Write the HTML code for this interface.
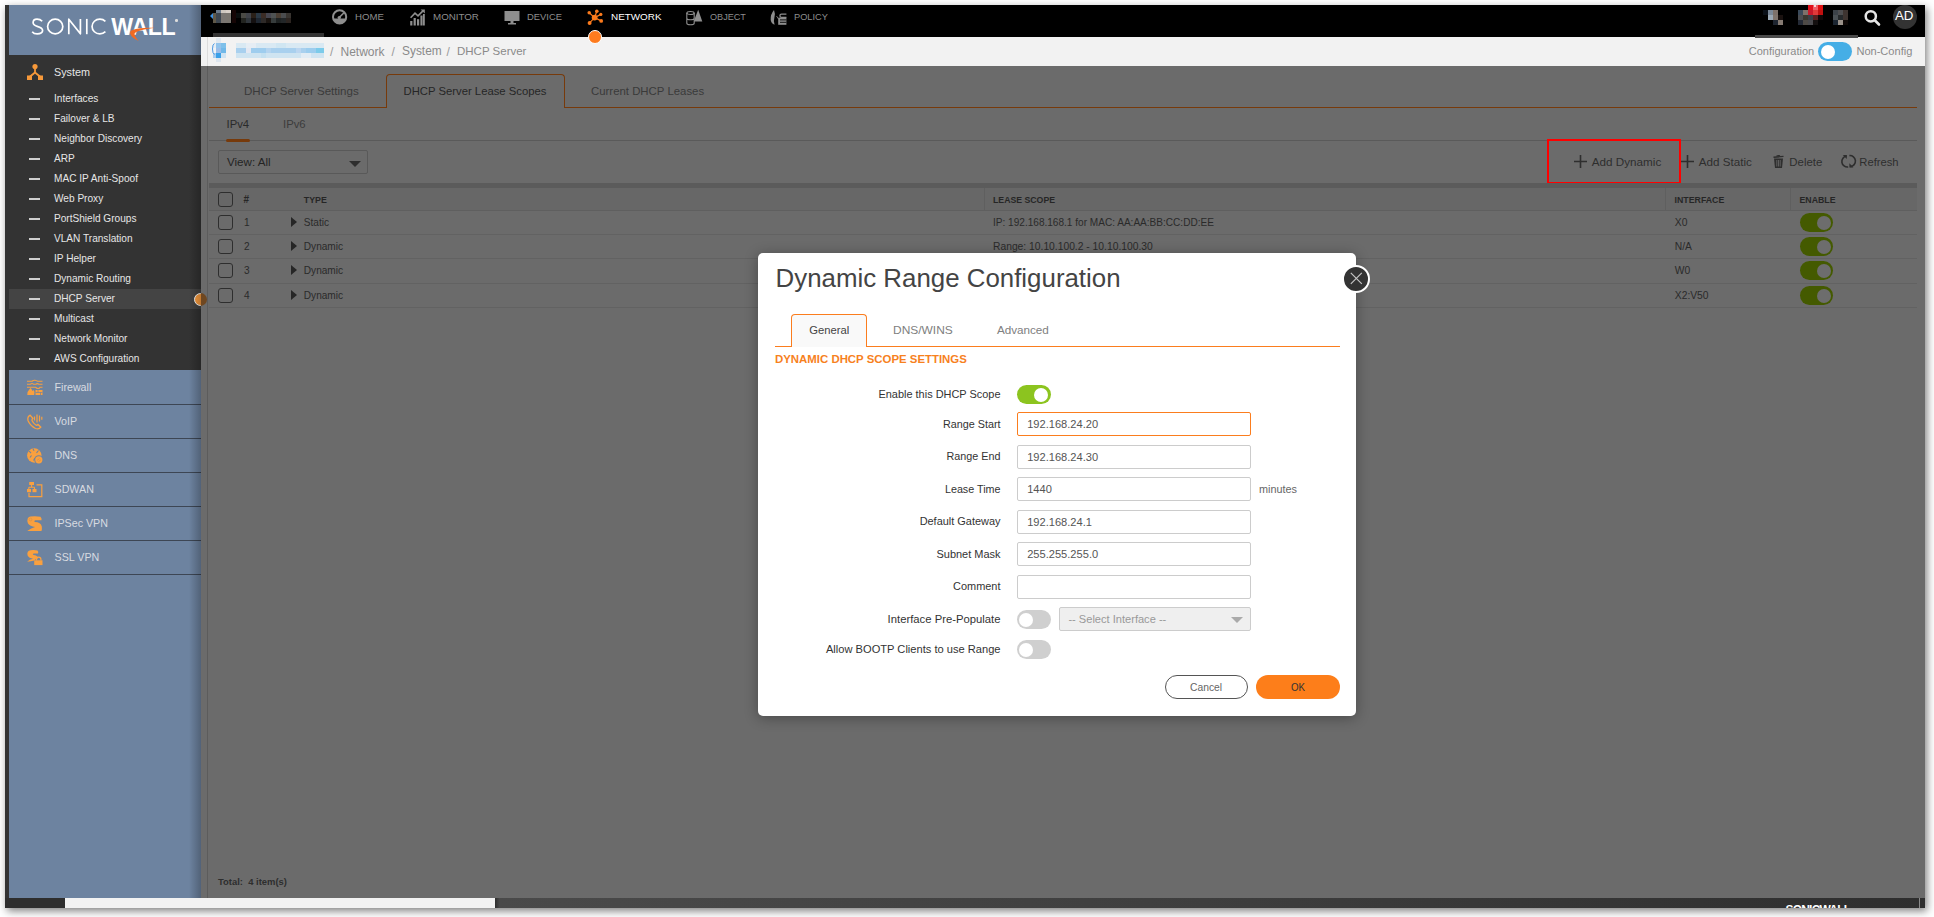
<!DOCTYPE html>
<html><head><meta charset="utf-8">
<style>
*{box-sizing:border-box;margin:0;padding:0}
html,body{width:1934px;height:917px;overflow:hidden;background:#fff;font-family:"Liberation Sans",sans-serif}
.a{position:absolute}
.t{position:absolute;white-space:nowrap;line-height:1}
svg{position:absolute;overflow:visible}
</style></head><body>

<div class="a" style="left:5px;top:5px;width:1920px;height:903px;background:#333;box-shadow:2px 3px 8px rgba(0,0,0,.5)"></div>
<div class="a" style="left:5px;top:5px;width:196px;height:893px;background:#333"></div>
<div class="a" style="left:9px;top:5px;width:192px;height:50px;background:#6d83a0"></div>
<svg style="left:0;top:0" width="220" height="60"><g stroke="#fff" stroke-width="1.7" fill="none" stroke-linejoin="round"><path d="M42.2 21.3Q40.2 19.1 37 19.1Q33.1 19.1 33.1 22.6Q33.1 25.3 37.2 26.4Q42.6 27.8 42.6 30.6Q42.6 33.9 37.2 33.9Q33.8 33.9 32.2 31.7"/><ellipse cx="55.2" cy="26.5" rx="7.6" ry="7.4"/><path d="M68.8 34.2V19.2L80.4 33.8V18.9"/><path d="M86.8 18.9V34.2"/><path d="M105.4 21.3A7.8 7.4 0 1 0 105.4 31.7"/></g></svg>
<div class="t" style="left:111.3px;top:16.1px;font-size:23.2px;color:#fff;font-weight:700;letter-spacing:-0.45px;transform:scaleY(1.03);transform-origin:0 19.5px">WALL</div>
<div class="a" style="left:175px;top:19px;width:2.6px;height:2.6px;background:#ddd;border-radius:50%"></div>
<svg style="left:0;top:0" width="220" height="60"><path d="M154.5 27.8Q140 27.2 132.5 30Q129.2 31.6 130.4 34.2Q132.3 38.2 138.8 41Q134.2 36.3 134.6 33.6Q136 30.3 154.5 27.8Z" fill="#f26a21"/></svg>
<svg style="left:25.6px;top:63px" width="18" height="18" viewBox="0 0 18 18"><circle cx="9" cy="3.5" r="2.6" fill="#f7993a"/><path d="M9 5 V9.5 M9 9.5 L3.5 14 M9 9.5 L14.5 14" stroke="#f7993a" stroke-width="1.8" fill="none"/><rect x="1" y="12.5" width="5" height="4.5" fill="#f7993a"/><rect x="12" y="12.5" width="5" height="4.5" fill="#f7993a"/></svg>
<div class="t" style="left:54px;top:67.06px;font-size:10.8px;color:#e6e6e6;font-weight:400;">System</div>
<div class="a" style="left:29px;top:98px;width:11px;height:2px;background:#cfcfcf"></div>
<div class="t" style="left:54px;top:93.95px;font-size:10.1px;color:#e6e6e6;font-weight:400;">Interfaces</div>
<div class="a" style="left:29px;top:118px;width:11px;height:2px;background:#cfcfcf"></div>
<div class="t" style="left:54px;top:113.95px;font-size:10.1px;color:#e6e6e6;font-weight:400;">Failover &amp; LB</div>
<div class="a" style="left:29px;top:138px;width:11px;height:2px;background:#cfcfcf"></div>
<div class="t" style="left:54px;top:133.95px;font-size:10.1px;color:#e6e6e6;font-weight:400;">Neighbor Discovery</div>
<div class="a" style="left:29px;top:158px;width:11px;height:2px;background:#cfcfcf"></div>
<div class="t" style="left:54px;top:153.95px;font-size:10.1px;color:#e6e6e6;font-weight:400;">ARP</div>
<div class="a" style="left:29px;top:178px;width:11px;height:2px;background:#cfcfcf"></div>
<div class="t" style="left:54px;top:173.95px;font-size:10.1px;color:#e6e6e6;font-weight:400;">MAC IP Anti-Spoof</div>
<div class="a" style="left:29px;top:198px;width:11px;height:2px;background:#cfcfcf"></div>
<div class="t" style="left:54px;top:193.95px;font-size:10.1px;color:#e6e6e6;font-weight:400;">Web Proxy</div>
<div class="a" style="left:29px;top:218px;width:11px;height:2px;background:#cfcfcf"></div>
<div class="t" style="left:54px;top:213.95px;font-size:10.1px;color:#e6e6e6;font-weight:400;">PortShield Groups</div>
<div class="a" style="left:29px;top:238px;width:11px;height:2px;background:#cfcfcf"></div>
<div class="t" style="left:54px;top:233.95px;font-size:10.1px;color:#e6e6e6;font-weight:400;">VLAN Translation</div>
<div class="a" style="left:29px;top:258px;width:11px;height:2px;background:#cfcfcf"></div>
<div class="t" style="left:54px;top:253.95px;font-size:10.1px;color:#e6e6e6;font-weight:400;">IP Helper</div>
<div class="a" style="left:29px;top:278px;width:11px;height:2px;background:#cfcfcf"></div>
<div class="t" style="left:54px;top:273.95px;font-size:10.1px;color:#e6e6e6;font-weight:400;">Dynamic Routing</div>
<div class="a" style="left:9px;top:289px;width:192px;height:20px;background:#444"></div>
<div class="a" style="left:29px;top:298px;width:11px;height:2px;background:#cfcfcf"></div>
<div class="t" style="left:54px;top:293.95px;font-size:10.1px;color:#e6e6e6;font-weight:400;">DHCP Server</div>
<div class="a" style="left:29px;top:318px;width:11px;height:2px;background:#cfcfcf"></div>
<div class="t" style="left:54px;top:313.95px;font-size:10.1px;color:#e6e6e6;font-weight:400;">Multicast</div>
<div class="a" style="left:29px;top:338px;width:11px;height:2px;background:#cfcfcf"></div>
<div class="t" style="left:54px;top:333.95px;font-size:10.1px;color:#e6e6e6;font-weight:400;">Network Monitor</div>
<div class="a" style="left:29px;top:358px;width:11px;height:2px;background:#cfcfcf"></div>
<div class="t" style="left:54px;top:353.95px;font-size:10.1px;color:#e6e6e6;font-weight:400;">AWS Configuration</div>
<div class="a" style="left:9px;top:370px;width:192px;height:528px;background:#6d83a0"></div>
<div class="a" style="left:9px;top:404px;width:192px;height:1px;background:#3d4654"></div>
<div class="t" style="left:54.5px;top:382.24px;font-size:10.7px;color:#d8dbe0;font-weight:400;">Firewall</div>
<div class="a" style="left:9px;top:438px;width:192px;height:1px;background:#3d4654"></div>
<div class="t" style="left:54.5px;top:416.24px;font-size:10.7px;color:#d8dbe0;font-weight:400;">VoIP</div>
<div class="a" style="left:9px;top:472px;width:192px;height:1px;background:#3d4654"></div>
<div class="t" style="left:54.5px;top:450.24px;font-size:10.7px;color:#d8dbe0;font-weight:400;">DNS</div>
<div class="a" style="left:9px;top:506px;width:192px;height:1px;background:#3d4654"></div>
<div class="t" style="left:54.5px;top:484.24px;font-size:10.7px;color:#d8dbe0;font-weight:400;">SDWAN</div>
<div class="a" style="left:9px;top:540px;width:192px;height:1px;background:#3d4654"></div>
<div class="t" style="left:54.5px;top:518.24px;font-size:10.7px;color:#d8dbe0;font-weight:400;">IPSec VPN</div>
<div class="a" style="left:9px;top:574px;width:192px;height:1px;background:#3d4654"></div>
<div class="t" style="left:54.5px;top:552.24px;font-size:10.7px;color:#d8dbe0;font-weight:400;">SSL VPN</div>
<svg style="left:27px;top:380px" width="16" height="15" viewBox="0 0 16 15"><path d="M0 1.2H5Q6.5 0 8 0.3Q9.5 0.6 10.5 1.2H15.5M0 4.2H3.5Q5 2.8 6.5 4.2H9Q10 3 12 4.2H15.5M0 7.2H8.5Q9.5 8.5 11 8.5Q12.5 8.5 13 7.2H15.5" stroke="#f9a03f" stroke-width="1.1" fill="none"/><path d="M0.3 15Q-0.3 11.8 2.5 9.2Q3.3 8.5 3.5 7.8Q5 9.5 5.5 11Q6.5 10.5 6.5 9.8Q8.5 12.5 7.2 15Z" fill="#f9a03f"/><path d="M8.5 10H15.5V15H8.5Z" fill="#f9a03f"/><path d="M8.5 12.5H15.5M11 10V12.5M13.5 12.5V15" stroke="#6d83a0" stroke-width="0.7"/></svg>
<svg style="left:27px;top:414px" width="16" height="16" viewBox="0 0 16 16"><path d="M3.2 1.2Q0.2 2.5 1 6.5Q3 11.5 8.5 14.5Q12 15.8 13.8 13.2L11 10.5Q10 11.6 8.8 11Q6.2 9.2 5 6.5Q4.8 5.3 5.8 4.3Z" stroke="#f9a03f" stroke-width="1.3" fill="none"/><path d="M7.5 2.5V6.5M10 0.5V8.5M12.5 1.5V7.5M14.8 2.8V5.8" stroke="#f9a03f" stroke-width="1.2"/></svg>
<svg style="left:27px;top:448px" width="16" height="16" viewBox="0 0 16 16"><circle cx="7.3" cy="7.5" r="7.2" fill="#f9a03f"/><path d="M2.2 3.2L4 5.2M6 0.8L7 2.8M9.5 4.8L11.5 2.5M4.5 7.5L3 9.5M8 10L6.5 12.5" stroke="#6d83a0" stroke-width="1.1"/><circle cx="11.8" cy="11.8" r="4.6" fill="#6d83a0"/><circle cx="11.8" cy="11.8" r="3.6" fill="#f9a03f"/><path d="M10 12.5L12.5 10.5M11.5 13.5L13.8 12" stroke="#c98a50" stroke-width="0.6"/></svg>
<svg style="left:27px;top:482px" width="16" height="16" viewBox="0 0 16 16"><rect x="2.2" y="0" width="4.8" height="3" fill="#f9a03f"/><path d="M4.6 3V5.2M1.8 5.2H7.5M1.8 5.2V7M7.5 5.2V7" stroke="#f9a03f" stroke-width="1.1" fill="none"/><rect x="0" y="7" width="4" height="3.2" fill="#f9a03f"/><rect x="5.5" y="7" width="4" height="3.2" fill="#f9a03f"/><path d="M9.5 2.8H14.8V14.6H2V10.8" stroke="#f9a03f" stroke-width="1.2" fill="none"/></svg>
<svg style="left:27px;top:516px" width="16" height="16" viewBox="0 0 16 16"><path d="M3.5 0.5Q8.5 -0.3 13.5 0.8Q15 2.5 14.5 4.3H8.2Q6.5 5 7.8 6Q13.8 6.2 14.8 10.5Q15.2 13 14.5 15H0.2Q3.5 12.5 8 11Q3 10 1 7.5Q-0.2 4.5 0.8 2.2Q1.8 0.8 3.5 0.5Z" fill="#f9a03f"/><circle cx="3.5" cy="3.5" r="1.4" stroke="#c98a50" stroke-width="0.5" fill="none"/></svg>
<svg style="left:27px;top:550px" width="16" height="16" viewBox="0 0 16 16"><path d="M3.5 0.2Q7.5 -0.3 10.5 0.5Q11.8 2 11 3.5H6.5Q5.2 4.2 6.5 5Q10.5 5.3 11.2 8Q8.5 8.5 7.5 10.5Q3.5 11.5 0.2 11.8Q2.5 9.5 6 8.8Q2 8.2 0.8 6Q-0.2 3.5 0.8 1.8Q1.8 0.5 3.5 0.2Z" fill="#f9a03f"/><path d="M9.5 10.5V9.3A2.2 2.2 0 0 1 13.9 9.3V10.5" stroke="#f9a03f" stroke-width="1.2" fill="none"/><rect x="7.2" y="10.3" width="8.3" height="4.8" fill="#f9a03f"/></svg>
<div class="a" style="left:194px;top:293px;width:13px;height:13px;border-radius:50%;background:#fe9f40;border:1.2px solid #fff"></div>
<div class="a" style="left:189px;top:5px;width:12px;height:893px;background:linear-gradient(to right,rgba(0,0,0,0),rgba(0,0,0,.25))"></div>
<div class="a" style="left:201px;top:5px;width:1724px;height:32px;background:#000"></div>
<div class="a" style="left:201px;top:37px;width:1724px;height:29px;background:#f2f2f2"></div>
<div class="a" style="left:207px;top:37px;width:1px;height:29px;background:#dcdcdc"></div>
<div class="a" style="left:213px;top:13px;width:3px;height:10px;background:#5f5848"></div>
<div class="a" style="left:216px;top:10px;width:5px;height:3px;background:#6a7888"></div>
<div class="a" style="left:216px;top:13px;width:5px;height:10px;background:#3d4650"></div>
<div class="a" style="left:221px;top:10px;width:5px;height:3px;background:#cfc8c0"></div>
<div class="a" style="left:221px;top:13px;width:5px;height:10px;background:#7a7672"></div>
<div class="a" style="left:226px;top:10px;width:5px;height:3px;background:#d8d0c8"></div>
<div class="a" style="left:226px;top:13px;width:5px;height:10px;background:#7a7670"></div>
<div class="a" style="left:232px;top:10px;width:4px;height:13px;background:#150505"></div>
<div class="a" style="left:236px;top:13px;width:5px;height:5px;background:#0a0e0e"></div>
<div class="a" style="left:241px;top:13px;width:5px;height:5px;background:#4a4a45"></div>
<div class="a" style="left:241px;top:18px;width:5px;height:5px;background:#222420"></div>
<div class="a" style="left:246px;top:13px;width:5px;height:5px;background:#40434a"></div>
<div class="a" style="left:246px;top:18px;width:5px;height:5px;background:#30363c"></div>
<div class="a" style="left:251px;top:13px;width:5px;height:5px;background:#2a2018"></div>
<div class="a" style="left:251px;top:18px;width:5px;height:5px;background:#141010"></div>
<div class="a" style="left:256px;top:13px;width:5px;height:5px;background:#2a3845"></div>
<div class="a" style="left:256px;top:18px;width:5px;height:5px;background:#1e2630"></div>
<div class="a" style="left:261px;top:13px;width:5px;height:5px;background:#3b2c25"></div>
<div class="a" style="left:261px;top:18px;width:5px;height:5px;background:#2e2a28"></div>
<div class="a" style="left:266px;top:13px;width:5px;height:5px;background:#45454f"></div>
<div class="a" style="left:266px;top:18px;width:5px;height:5px;background:#1a1410"></div>
<div class="a" style="left:271px;top:13px;width:5px;height:5px;background:#4e5252"></div>
<div class="a" style="left:271px;top:18px;width:5px;height:5px;background:#363c3c"></div>
<div class="a" style="left:276px;top:13px;width:5px;height:5px;background:#4a3e33"></div>
<div class="a" style="left:276px;top:18px;width:5px;height:5px;background:#1e2222"></div>
<div class="a" style="left:281px;top:13px;width:5px;height:5px;background:#4a4c4e"></div>
<div class="a" style="left:281px;top:18px;width:5px;height:5px;background:#222628"></div>
<div class="a" style="left:286px;top:13px;width:5px;height:5px;background:#383430"></div>
<div class="a" style="left:286px;top:18px;width:5px;height:5px;background:#2c2420"></div>
<svg style="left:210px;top:13px" width="4" height="6"><path d="M3 0L0 3L3 6Z" fill="#3d8fe0"/></svg>
<div class="a" style="left:213px;top:33px;width:111px;height:4px;background:#333"></div>
<div class="a" style="left:216px;top:38px;width:5px;height:5px;background:#e0e8f0"></div>
<div class="a" style="left:213px;top:43px;width:3px;height:5px;background:#e8eef4"></div>
<div class="a" style="left:216px;top:43px;width:5px;height:5px;background:#93c4ec"></div>
<div class="a" style="left:221px;top:43px;width:5px;height:5px;background:#7ec0ea"></div>
<div class="a" style="left:213px;top:48px;width:3px;height:5px;background:#f0f4f8"></div>
<div class="a" style="left:216px;top:48px;width:5px;height:5px;background:#9cbde8"></div>
<div class="a" style="left:221px;top:48px;width:5px;height:5px;background:#70b8e8"></div>
<div class="a" style="left:213px;top:53px;width:3px;height:5px;background:#a8cdf0"></div>
<div class="a" style="left:216px;top:53px;width:5px;height:5px;background:#3aa0e8"></div>
<div class="a" style="left:221px;top:53px;width:5px;height:5px;background:#cfe3f2"></div>
<div class="a" style="left:216px;top:58px;width:5px;height:4px;background:#dde6ef"></div>
<div class="a" style="left:236px;top:43px;width:88px;height:5px;background:#d9e9f3"></div>
<div class="a" style="left:236px;top:48px;width:88px;height:5px;background:#a9d0ee"></div>
<div class="a" style="left:236px;top:53px;width:88px;height:5px;background:#cfe4f1"></div>
<div class="a" style="left:246px;top:48px;width:5px;height:5px;background:#e4e8f2"></div>
<div class="a" style="left:251px;top:48px;width:15px;height:5px;background:#9fcdee"></div>
<div class="a" style="left:266px;top:48px;width:5px;height:5px;background:#b5d4ef"></div>
<div class="a" style="left:296px;top:48px;width:5px;height:5px;background:#bcd6f0"></div>
<div class="a" style="left:306px;top:48px;width:10px;height:5px;background:#9ccdee"></div>
<div class="a" style="left:316px;top:48px;width:8px;height:5px;background:#7ccbea"></div>
<div class="a" style="left:246px;top:43px;width:10px;height:5px;background:#e6edf4"></div>
<div class="a" style="left:276px;top:43px;width:10px;height:5px;background:#d0e6f2"></div>
<div class="a" style="left:301px;top:53px;width:10px;height:5px;background:#e2ecf4"></div>
<div class="a" style="left:261px;top:53px;width:5px;height:5px;background:#c4e0f0"></div>
<svg style="left:212px;top:43px" width="3" height="12"><path d="M2.5 0.5Q0.5 1 0.5 6Q0.5 10.5 2.5 11.5" stroke="#3a8fe0" stroke-width="0.9" fill="none"/></svg>
<div class="t" style="left:330px;top:45.64px;font-size:12px;color:#9a9a9a;font-weight:400;">/</div>
<div class="t" style="left:340.5px;top:45.64px;font-size:12px;color:#8a8a8a;font-weight:400;">Network</div>
<div class="t" style="left:391.5px;top:45.64px;font-size:12px;color:#9a9a9a;font-weight:400;">/</div>
<div class="t" style="left:402px;top:45.73px;font-size:11.9px;color:#8a8a8a;font-weight:400;">System</div>
<div class="t" style="left:446.5px;top:45.64px;font-size:12px;color:#9a9a9a;font-weight:400;">/</div>
<div class="t" style="left:457px;top:46.07px;font-size:11.5px;color:#8a8a8a;font-weight:400;">DHCP Server</div>
<div class="t" style="left:1748.8px;top:45.99px;font-size:11px;color:#8a8a8a;font-weight:400;">Configuration</div>
<div class="a" style="left:1818px;top:42px;width:34px;height:19px;border-radius:10px;background:#45aee6"><div class="a" style="left:2.8px;top:2.5px;width:14px;height:14px;border-radius:50%;background:#fff"></div></div>
<div class="t" style="left:1856.4px;top:45.93px;font-size:11.07px;color:#8a8a8a;font-weight:400;">Non-Config</div>
<div class="t" style="left:355.4px;top:11.92px;font-size:9.9px;color:#8e8e8e;font-weight:400;transform:scaleX(0.976);transform-origin:left">HOME</div>
<div class="t" style="left:433px;top:11.92px;font-size:9.9px;color:#8e8e8e;font-weight:400;transform:scaleX(0.988);transform-origin:left">MONITOR</div>
<div class="t" style="left:527.4px;top:11.92px;font-size:9.9px;color:#8e8e8e;font-weight:400;transform:scaleX(0.95);transform-origin:left">DEVICE</div>
<div class="t" style="left:611px;top:11.92px;font-size:9.9px;color:#ffffff;font-weight:400;transform:scaleX(1.0);transform-origin:left">NETWORK</div>
<div class="t" style="left:710px;top:11.92px;font-size:9.9px;color:#8e8e8e;font-weight:400;transform:scaleX(0.922);transform-origin:left">OBJECT</div>
<div class="t" style="left:794.4px;top:11.92px;font-size:9.9px;color:#8e8e8e;font-weight:400;transform:scaleX(0.936);transform-origin:left">POLICY</div>
<svg style="left:331px;top:9px" width="17" height="17" viewBox="0 0 17 17"><circle cx="8.6" cy="7.9" r="6.6" stroke="#8e8e8e" stroke-width="2" fill="none"/><path d="M2.2 9.5H15A6.6 6.6 0 0 1 2.2 9.5Z" fill="#8e8e8e"/><circle cx="8.3" cy="8.6" r="1.7" fill="#8e8e8e"/><path d="M8.3 8.4L13 3.7" stroke="#8e8e8e" stroke-width="1.5"/></svg>
<svg style="left:410px;top:9px" width="16" height="17" viewBox="0 0 16 17"><path d="M0.6 8.8L5 4.2L8 6.8L13.2 1.6" stroke="#8e8e8e" stroke-width="1.6" fill="none"/><path d="M10.6 0.4H14.8V4.6Z" fill="#8e8e8e"/><rect x="0.2" y="12" width="2.2" height="4.5" fill="#8e8e8e"/><rect x="3.6" y="9" width="2.2" height="7.5" fill="#8e8e8e"/><rect x="7" y="10.2" width="2.2" height="6.3" fill="#8e8e8e"/><rect x="10.4" y="6.5" width="2.2" height="10" fill="#8e8e8e"/><rect x="13" y="5" width="1.8" height="11.5" fill="#8e8e8e"/></svg>
<svg style="left:504px;top:10px" width="16" height="15" viewBox="0 0 16 15"><rect x="0.5" y="1" width="15" height="10" fill="#8e8e8e"/><rect x="6.5" y="11" width="3" height="2" fill="#8e8e8e"/><rect x="4" y="13" width="8" height="1.5" fill="#8e8e8e"/></svg>
<svg style="left:587px;top:9px" width="17" height="17" viewBox="0 0 17 17"><path d="M7.6 8.6L2.2 3.8M7.6 8.6L9.8 2.3M7.6 8.6L13.8 5.4M7.6 8.6L14.2 11.9M7.6 8.6L2.6 13.9" stroke="#fb7a1c" stroke-width="1.2"/><circle cx="7.6" cy="8.6" r="2.9" fill="#fb7a1c"/><circle cx="2.2" cy="3.8" r="1.75" fill="#fb7a1c"/><circle cx="9.8" cy="2.3" r="1.8" fill="#fb7a1c"/><circle cx="13.8" cy="5.4" r="1.65" fill="#fb7a1c"/><circle cx="14.2" cy="11.9" r="1.9" fill="#fb7a1c"/><circle cx="2.6" cy="13.9" r="2" fill="#fb7a1c"/></svg>
<div class="a" style="left:588px;top:30px;width:14px;height:14px;border-radius:50%;background:#fe7b1e;border:1px solid #fff"></div>
<svg style="left:686px;top:9px" width="17" height="16" viewBox="0 0 17 16"><path d="M7.6 12.6L12.2 0.7L16.3 12.6Z" fill="#8e8e8e"/><path d="M0.8 4V14.3A3.7 1.5 0 0 0 8.2 14.3V4Z" fill="#000"/><ellipse cx="4.5" cy="4" rx="3.7" ry="1.5" fill="#000" stroke="#8e8e8e" stroke-width="1.1"/><path d="M0.8 4V14.3A3.7 1.5 0 0 0 8.2 14.3V4M0.8 9.3A3.7 1.5 0 0 0 8.2 9.3" stroke="#8e8e8e" stroke-width="1.1" fill="none"/></svg>
<svg style="left:770px;top:10px" width="17" height="15" viewBox="0 0 17 15"><path d="M4 0Q0.2 4.5 0.7 10Q1.2 13.5 4.6 14.8Q3.2 11 4.4 7.5Q5.6 4 4 0Z" fill="#8e8e8e"/><path d="M16.4 4.2H11.5A1.6 1.6 0 0 0 11.5 7.4H16.4" stroke="#8e8e8e" stroke-width="1.3" fill="none"/><rect x="8.2" y="7.6" width="8.2" height="7.2" fill="#8e8e8e"/><path d="M10 9.9H16.4M10 12.3H16.4" stroke="#000" stroke-width="0.9"/><path d="M6.5 6L8.5 9" stroke="#8e8e8e" stroke-width="0.8"/></svg>
<div class="a" style="left:1763px;top:10px;width:5px;height:5px;background:#0a1018"></div>
<div class="a" style="left:1768px;top:10px;width:5px;height:5px;background:#7a8898"></div>
<div class="a" style="left:1768px;top:15px;width:5px;height:5px;background:#9aa8b5"></div>
<div class="a" style="left:1773px;top:10px;width:5px;height:5px;background:#7d716a"></div>
<div class="a" style="left:1773px;top:15px;width:5px;height:5px;background:#80756e"></div>
<div class="a" style="left:1778px;top:15px;width:5px;height:5px;background:#1a1210"></div>
<div class="a" style="left:1773px;top:20px;width:5px;height:5px;background:#1e2530"></div>
<div class="a" style="left:1778px;top:20px;width:5px;height:5px;background:#857a72"></div>
<div class="a" style="left:1798px;top:10px;width:5px;height:5px;background:#3a4a5a"></div>
<div class="a" style="left:1798px;top:15px;width:5px;height:5px;background:#4a4c50"></div>
<div class="a" style="left:1798px;top:20px;width:5px;height:5px;background:#242a36"></div>
<div class="a" style="left:1803px;top:10px;width:5px;height:5px;background:#7d716a"></div>
<div class="a" style="left:1803px;top:15px;width:5px;height:5px;background:#3a3830"></div>
<div class="a" style="left:1803px;top:20px;width:5px;height:5px;background:#4e4a46"></div>
<div class="a" style="left:1808px;top:5px;width:5px;height:5px;background:#e0101a"></div>
<div class="a" style="left:1808px;top:10px;width:5px;height:5px;background:#c8182a"></div>
<div class="a" style="left:1808px;top:15px;width:5px;height:5px;background:#3a4048"></div>
<div class="a" style="left:1808px;top:20px;width:5px;height:5px;background:#4a4a4e"></div>
<div class="a" style="left:1813px;top:5px;width:5px;height:5px;background:#ee6068"></div>
<div class="a" style="left:1813px;top:10px;width:5px;height:5px;background:#e03a3a"></div>
<div class="a" style="left:1813px;top:15px;width:5px;height:5px;background:#5a2020"></div>
<div class="a" style="left:1813px;top:20px;width:5px;height:5px;background:#141010"></div>
<div class="a" style="left:1818px;top:5px;width:5px;height:5px;background:#e01010"></div>
<div class="a" style="left:1818px;top:10px;width:5px;height:5px;background:#c01010"></div>
<div class="a" style="left:1818px;top:15px;width:5px;height:5px;background:#100808"></div>
<div class="a" style="left:1833px;top:10px;width:5px;height:5px;background:#3c4248"></div>
<div class="a" style="left:1833px;top:15px;width:5px;height:5px;background:#4a5054"></div>
<div class="a" style="left:1833px;top:20px;width:5px;height:5px;background:#1c2632"></div>
<div class="a" style="left:1838px;top:10px;width:5px;height:5px;background:#4e4e50"></div>
<div class="a" style="left:1838px;top:15px;width:5px;height:5px;background:#262a2c"></div>
<div class="a" style="left:1838px;top:20px;width:5px;height:5px;background:#9a928a"></div>
<div class="a" style="left:1843px;top:10px;width:5px;height:10px;background:#3e3430"></div>
<div class="a" style="left:1843px;top:20px;width:5px;height:5px;background:#100a08"></div>
<div class="a" style="left:1814px;top:5px;width:2px;height:2px;background:#fff;border-radius:50%"></div>
<svg style="left:1864px;top:10px" width="17" height="16" viewBox="0 0 17 16"><circle cx="6.8" cy="6.3" r="5.1" stroke="#e6e6e6" stroke-width="2.5" fill="none"/><path d="M10.5 10L15 14.5" stroke="#e6e6e6" stroke-width="2.6" stroke-linecap="round"/></svg>
<div class="a" style="left:1893px;top:5px;width:24px;height:24px;border-radius:50%;background:#333"></div>
<div class="t" style="left:1895px;top:9.34px;font-size:13.3px;color:#fff;font-weight:400;">AD</div>
<div class="a" style="left:1755px;top:35px;width:103px;height:3px;background:#4a4a4a"></div>
<div class="a" style="left:201px;top:66px;width:1724px;height:832px;background:#6b6b6b"></div>
<div class="a" style="left:201px;top:288px;width:6px;height:20px;background:transparent"></div>
<div class="a" style="left:201px;top:292px;width:6px;height:14px;overflow:hidden"><div class="a" style="left:-7px;top:1px;width:13px;height:13px;border-radius:50%;background:#6f4720"></div></div>
<div class="a" style="left:207px;top:66px;width:1px;height:832px;background:#5c5c5c"></div>
<div class="a" style="left:209px;top:107px;width:1708px;height:1px;background:#773a0b"></div>
<div class="a" style="left:386px;top:74px;width:179px;height:34px;border:1.2px solid #773a0b;border-bottom:none;border-radius:4px 4px 0 0;background:#6b6b6b"></div>
<div class="t" style="left:244px;top:86.02px;font-size:11.55px;color:#3a3a3a;font-weight:400;">DHCP Server Settings</div>
<div class="t" style="left:403.5px;top:86.23px;font-size:11.3px;color:#262626;font-weight:400;">DHCP Server Lease Scopes</div>
<div class="t" style="left:591px;top:86.15px;font-size:11.4px;color:#3a3a3a;font-weight:400;">Current DHCP Leases</div>
<div class="a" style="left:209px;top:140px;width:1708px;height:1px;background:#5a5a5a"></div>
<div class="t" style="left:226.5px;top:119.23px;font-size:11.3px;color:#2a2a2a;font-weight:400;">IPv4</div>
<div class="t" style="left:283px;top:119.23px;font-size:11.3px;color:#3c3c3c;font-weight:400;">IPv6</div>
<div class="a" style="left:226px;top:139px;width:24px;height:3px;background:#773a0b;border-radius:1.5px"></div>
<div class="a" style="left:218px;top:150px;width:150px;height:24px;border:1px solid #595959;border-radius:2px"></div>
<div class="t" style="left:227px;top:156.18px;font-size:11.6px;color:#242424;font-weight:400;">View: All</div>
<svg style="left:349px;top:161px" width="12" height="6"><path d="M0 0H12L6 6Z" fill="#2e2e2e"/></svg>
<svg style="left:1574px;top:155px" width="13" height="13"><path d="M6.5 0V13M0 6.5H13" stroke="#2e2e2e" stroke-width="1.6"/></svg>
<div class="t" style="left:1591.8px;top:155.80px;font-size:11.7px;color:#2e2e2e;font-weight:400;">Add Dynamic</div>
<svg style="left:1681px;top:155px" width="13" height="13"><path d="M6.5 0V13M0 6.5H13" stroke="#2e2e2e" stroke-width="1.6"/></svg>
<div class="t" style="left:1698.8px;top:155.86px;font-size:11.63px;color:#2e2e2e;font-weight:400;">Add Static</div>
<svg style="left:1773px;top:155px" width="11" height="13" viewBox="0 0 11 13"><path d="M0.5 2.2L10.5 1.4" stroke="#2e2e2e" stroke-width="1.4"/><path d="M3.5 1.2Q5 0 7 0.9" stroke="#2e2e2e" stroke-width="1.2" fill="none"/><path d="M1 3.6H10L9 13H2Z" fill="#2e2e2e"/><path d="M3.8 5V11.5M5.5 5V11.5M7.2 5V11.5" stroke="#6b6b6b" stroke-width="0.8"/></svg>
<div class="t" style="left:1789.3px;top:156.73px;font-size:11.42px;color:#2e2e2e;font-weight:400;">Delete</div>
<svg style="left:1841px;top:154px" width="15" height="15" viewBox="0 0 15 15"><path d="M5.6 2A5.5 5.5 0 0 0 7.2 13" stroke="#2e2e2e" stroke-width="1.6" fill="none"/><path d="M8.4 1.6A5.5 5.5 0 0 1 9.4 12.6" stroke="#2e2e2e" stroke-width="1.6" fill="none"/><path d="M1.8 1H5.8V5Z" fill="#2e2e2e"/><path d="M8.4 9.2V13.4H12.4Z" fill="#2e2e2e"/></svg>
<div class="t" style="left:1859.3px;top:156.90px;font-size:11.22px;color:#2e2e2e;font-weight:400;">Refresh</div>
<div class="a" style="left:1547px;top:139px;width:134px;height:45px;border:2px solid #ff0000"></div>
<div class="a" style="left:209px;top:183px;width:1708px;height:5px;background:#5b5b5b"></div>
<div class="a" style="left:209px;top:188px;width:1708px;height:23px;background:#676767"></div>
<div class="a" style="left:209px;top:210px;width:1708px;height:1px;background:#5f5f5f"></div>
<div class="a" style="left:984px;top:188px;width:1px;height:23px;background:#5f5f5f"></div>
<div class="a" style="left:1665px;top:188px;width:1px;height:23px;background:#5f5f5f"></div>
<div class="a" style="left:1790px;top:188px;width:1px;height:23px;background:#5f5f5f"></div>
<div class="t" style="left:243.5px;top:195.13px;font-size:10px;color:#262626;font-weight:700;">#</div>
<div class="t" style="left:303.8px;top:195.85px;font-size:8.8px;color:#262626;font-weight:700;">TYPE</div>
<div class="t" style="left:993px;top:195.92px;font-size:8.72px;color:#262626;font-weight:700;">LEASE SCOPE</div>
<div class="t" style="left:1674.6px;top:195.88px;font-size:8.77px;color:#262626;font-weight:700;">INTERFACE</div>
<div class="t" style="left:1799.5px;top:195.88px;font-size:8.76px;color:#262626;font-weight:700;">ENABLE</div>
<div class="a" style="left:218px;top:192px;width:15px;height:15px;border:1.3px solid #2e2e2e;border-radius:3px"></div>
<div class="a" style="left:209px;top:234px;width:1708px;height:1px;background:#626262"></div>
<div class="a" style="left:218px;top:215px;width:15px;height:15px;border:1.3px solid #2e2e2e;border-radius:3px"></div>
<div class="t" style="left:244px;top:217.75px;font-size:10.1px;color:#2a2a2a;font-weight:400;">1</div>
<svg style="left:291px;top:217px" width="6" height="10"><path d="M0 0L6 5L0 10Z" fill="#262626"/></svg>
<div class="t" style="left:303.8px;top:217.75px;font-size:10.1px;color:#2a2a2a;font-weight:400;">Static</div>
<div class="t" style="left:993px;top:217.78px;font-size:10.07px;color:#2a2a2a;font-weight:400;">IP: 192.168.168.1 for MAC: AA:AA:BB:CC:DD:EE</div>
<div class="t" style="left:1674.8px;top:217.58px;font-size:10.3px;color:#2a2a2a;font-weight:400;">X0</div>
<div class="a" style="left:1800px;top:213px;width:33px;height:19px;border-radius:10px;background:#445a00"><div class="a" style="left:17px;top:2.5px;width:14px;height:14px;border-radius:50%;background:#6d6d6d"></div></div>
<div class="a" style="left:209px;top:258px;width:1708px;height:1px;background:#626262"></div>
<div class="a" style="left:218px;top:239px;width:15px;height:15px;border:1.3px solid #2e2e2e;border-radius:3px"></div>
<div class="t" style="left:244px;top:241.75px;font-size:10.1px;color:#2a2a2a;font-weight:400;">2</div>
<svg style="left:291px;top:241px" width="6" height="10"><path d="M0 0L6 5L0 10Z" fill="#262626"/></svg>
<div class="t" style="left:303.8px;top:241.75px;font-size:10.1px;color:#2a2a2a;font-weight:400;">Dynamic</div>
<div class="t" style="left:993px;top:241.57px;font-size:10.31px;color:#2a2a2a;font-weight:400;">Range: 10.10.100.2 - 10.10.100.30</div>
<div class="t" style="left:1674.8px;top:241.58px;font-size:10.3px;color:#2a2a2a;font-weight:400;">N/A</div>
<div class="a" style="left:1800px;top:237px;width:33px;height:19px;border-radius:10px;background:#445a00"><div class="a" style="left:17px;top:2.5px;width:14px;height:14px;border-radius:50%;background:#6d6d6d"></div></div>
<div class="a" style="left:209px;top:283px;width:1708px;height:1px;background:#626262"></div>
<div class="a" style="left:218px;top:263px;width:15px;height:15px;border:1.3px solid #2e2e2e;border-radius:3px"></div>
<div class="t" style="left:244px;top:265.75px;font-size:10.1px;color:#2a2a2a;font-weight:400;">3</div>
<svg style="left:291px;top:265px" width="6" height="10"><path d="M0 0L6 5L0 10Z" fill="#262626"/></svg>
<div class="t" style="left:303.8px;top:265.75px;font-size:10.1px;color:#2a2a2a;font-weight:400;">Dynamic</div>
<div class="t" style="left:1674.8px;top:265.58px;font-size:10.3px;color:#2a2a2a;font-weight:400;">W0</div>
<div class="a" style="left:1800px;top:261px;width:33px;height:19px;border-radius:10px;background:#445a00"><div class="a" style="left:17px;top:2.5px;width:14px;height:14px;border-radius:50%;background:#6d6d6d"></div></div>
<div class="a" style="left:209px;top:307px;width:1708px;height:1px;background:#626262"></div>
<div class="a" style="left:218px;top:288px;width:15px;height:15px;border:1.3px solid #2e2e2e;border-radius:3px"></div>
<div class="t" style="left:244px;top:290.75px;font-size:10.1px;color:#2a2a2a;font-weight:400;">4</div>
<svg style="left:291px;top:290px" width="6" height="10"><path d="M0 0L6 5L0 10Z" fill="#262626"/></svg>
<div class="t" style="left:303.8px;top:290.75px;font-size:10.1px;color:#2a2a2a;font-weight:400;">Dynamic</div>
<div class="t" style="left:1674.8px;top:290.58px;font-size:10.3px;color:#2a2a2a;font-weight:400;">X2:V50</div>
<div class="a" style="left:1800px;top:286px;width:33px;height:19px;border-radius:10px;background:#445a00"><div class="a" style="left:17px;top:2.5px;width:14px;height:14px;border-radius:50%;background:#6d6d6d"></div></div>
<div class="t" style="left:218px;top:877.22px;font-size:9.43px;color:#2e2e2e;font-weight:700;">Total:&nbsp; 4 item(s)</div>
<div class="a" style="left:5px;top:898px;width:1920px;height:10px;background:linear-gradient(to right,#2e2e2e 0px,#2e2e2e 490px,#4a4a4a 495px,#3e3e3e 1200px,#2e2e2e 1920px)"></div>
<div class="a" style="left:65px;top:898px;width:430px;height:10px;background:#f2f2f2"></div>
<div class="a" style="left:1780px;top:898px;width:80px;height:10px;overflow:hidden"><div class="t" style="left:5.5px;top:6.0px;font-size:12px;color:#fff;font-weight:700;letter-spacing:-0.8px">SONICWALL</div></div>
<div class="a" style="left:1919px;top:898px;width:1px;height:10px;background:#8a8a8a"></div>
<div class="a" style="left:758px;top:253px;width:598px;height:463px;background:#fff;border-radius:5px;box-shadow:0 2px 14px rgba(0,0,0,.32)"></div>
<div class="t" style="left:775.6px;top:265.71px;font-size:25.86px;color:#444444;font-weight:400;">Dynamic Range Configuration</div>
<div class="a" style="left:1342px;top:265px;width:28px;height:28px;border-radius:50%;background:#333;border:2px solid #fff"></div>
<svg style="left:1350px;top:271.8px" width="13" height="13"><path d="M0.8 0.8L11.8 11.8M11.8 0.8L0.8 11.8" stroke="#c4c4c4" stroke-width="1.2"/></svg>
<div class="a" style="left:775px;top:346px;width:565px;height:1.3px;background:#fb7d1e"></div>
<div class="a" style="left:791px;top:314px;width:76px;height:33px;border:1.3px solid #fb7d1e;border-bottom:none;border-radius:4px 4px 0 0;background:#f9f9f9"></div>
<div class="t" style="left:809.3px;top:325.09px;font-size:11.24px;color:#444;font-weight:400;">General</div>
<div class="t" style="left:893.3px;top:324.55px;font-size:11.4px;color:#808080;font-weight:400;transform:scaleX(1.05);transform-origin:left">DNS/WINS</div>
<div class="t" style="left:996.9px;top:324.30px;font-size:11.69px;color:#808080;font-weight:400;">Advanced</div>
<div class="t" style="left:775px;top:353.53px;font-size:11.42px;color:#f7811e;font-weight:700;">DYNAMIC DHCP SCOPE SETTINGS</div>
<div class="t" style="right:933.5px;top:388.54px;font-size:10.94px;color:#333;font-weight:400;text-align:right;">Enable this DHCP Scope</div>
<div class="a" style="left:1017px;top:385px;width:34px;height:19px;border-radius:10px;background:#8cc41f"><div class="a" style="left:17px;top:2.5px;width:14px;height:14px;border-radius:50%;background:#fff"></div></div>
<div class="a" style="left:1017px;top:412px;width:234px;height:24px;border:1px solid #fb7d1e;border-radius:2px;background:#fff"></div>
<div class="t" style="right:933.5px;top:418.66px;font-size:10.8px;color:#333;font-weight:400;text-align:right;">Range Start</div>
<div class="t" style="left:1027.2px;top:419.20px;font-size:11.1px;color:#555;font-weight:400;">192.168.24.20</div>
<div class="a" style="left:1017px;top:445px;width:234px;height:24px;border:1px solid #cccccc;border-radius:2px;background:#fff"></div>
<div class="t" style="right:933.5px;top:450.87px;font-size:10.79px;color:#333;font-weight:400;text-align:right;">Range End</div>
<div class="t" style="left:1027.2px;top:452.20px;font-size:11.1px;color:#555;font-weight:400;">192.168.24.30</div>
<div class="a" style="left:1017px;top:477px;width:234px;height:24px;border:1px solid #cccccc;border-radius:2px;background:#fff"></div>
<div class="t" style="right:933.5px;top:483.69px;font-size:10.76px;color:#333;font-weight:400;text-align:right;">Lease Time</div>
<div class="t" style="left:1027.2px;top:484.20px;font-size:11.1px;color:#555;font-weight:400;">1440</div>
<div class="a" style="left:1017px;top:510px;width:234px;height:24px;border:1px solid #cccccc;border-radius:2px;background:#fff"></div>
<div class="t" style="right:933.5px;top:515.73px;font-size:10.95px;color:#333;font-weight:400;text-align:right;">Default Gateway</div>
<div class="t" style="left:1027.2px;top:517.20px;font-size:11.1px;color:#555;font-weight:400;">192.168.24.1</div>
<div class="a" style="left:1017px;top:542px;width:234px;height:24px;border:1px solid #cccccc;border-radius:2px;background:#fff"></div>
<div class="t" style="right:933.5px;top:548.51px;font-size:10.97px;color:#333;font-weight:400;text-align:right;">Subnet Mask</div>
<div class="t" style="left:1027.2px;top:549.20px;font-size:11.1px;color:#555;font-weight:400;">255.255.255.0</div>
<div class="a" style="left:1017px;top:575px;width:234px;height:24px;border:1px solid #cccccc;border-radius:2px;background:#fff"></div>
<div class="t" style="right:933.5px;top:580.73px;font-size:10.95px;color:#333;font-weight:400;text-align:right;">Comment</div>
<div class="t" style="left:1259px;top:483.62px;font-size:10.85px;color:#666;font-weight:400;">minutes</div>
<div class="t" style="right:933.5px;top:614.04px;font-size:11.29px;color:#333;font-weight:400;text-align:right;">Interface Pre-Populate</div>
<div class="a" style="left:1017px;top:610px;width:34px;height:19px;border-radius:10px;background:#cfcfcf"><div class="a" style="left:2px;top:2.5px;width:14px;height:14px;border-radius:50%;background:#fff"></div></div>
<div class="a" style="left:1059px;top:607px;width:192px;height:24px;border:1px solid #cccccc;border-radius:2px;background:#efefef"></div>
<div class="t" style="left:1068.4px;top:614.11px;font-size:11.09px;color:#999;font-weight:400;">-- Select Interface --</div>
<svg style="left:1231px;top:617px" width="12" height="6"><path d="M0 0H12L6 6Z" fill="#aaa"/></svg>
<div class="t" style="right:933.5px;top:644.19px;font-size:11.12px;color:#333;font-weight:400;text-align:right;">Allow BOOTP Clients to use Range</div>
<div class="a" style="left:1017px;top:640px;width:34px;height:19px;border-radius:10px;background:#cfcfcf"><div class="a" style="left:2px;top:2.5px;width:14px;height:14px;border-radius:50%;background:#fff"></div></div>
<div class="a" style="left:1165px;top:675px;width:83px;height:24px;border:1px solid #555;border-radius:12px;background:#fff"></div>
<div class="t" style="left:1190px;top:682.98px;font-size:10.3px;color:#666;font-weight:400;">Cancel</div>
<div class="a" style="left:1256px;top:675px;width:84px;height:24px;border-radius:12px;background:#fd7e1a"></div>
<div class="t" style="left:1290.6px;top:681.93px;font-size:11.3px;color:#333;font-weight:400;transform:scaleX(0.86);transform-origin:left">OK</div>
</body></html>
